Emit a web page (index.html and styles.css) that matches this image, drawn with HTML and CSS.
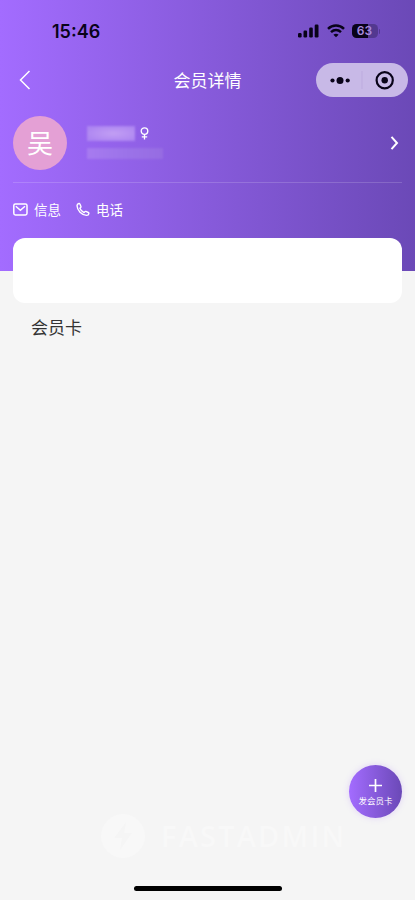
FILE: index.html
```html
<!DOCTYPE html>
<html lang="zh-CN">
<head>
<meta charset="utf-8">
<meta name="viewport" content="width=device-width, initial-scale=1">
<title>会员详情</title>
<link rel="stylesheet" href="styles.css">
</head>
<body>
<main class="screen">
  <header class="hero">
    <div class="status">
      <span class="time">15:46</span>
      <div class="signals">
        <svg width="22" height="14" viewBox="0 0 22 14" fill="#090319"><rect x="0" y="9" width="3.600" height="4.500" rx="1.200"/><rect x="5.500" y="6.500" width="3.600" height="7" rx="1.200"/><rect x="11.200" y="3.500" width="3.600" height="10" rx="1.200"/><rect x="16.700" y="0.500" width="3.800" height="13" rx="1.200"/></svg>
        <svg class="wifi" width="18" height="14" viewBox="0 0 18 14" fill="none" stroke="#090319" stroke-width="2.500"><path d="M1 4.800C5.500.500 12.500.500 17 4.800"/><path d="M4 8.100C7 5.400 11 5.400 14 8.100"/><path d="M9 13.300 6.400 10.700Q9 8.900 11.600 10.700Z" fill="#090319" stroke="none"/></svg>
        <div class="battery"><span>63</span></div>
        <i class="battery-tip"></i>
      </div>
    </div>
    <nav class="navbar">
      <svg class="back" width="12" height="20" viewBox="0 0 12 20" fill="none" stroke="#fff" stroke-width="1.500"><path d="M10.500 1 1.500 10l9 9"/></svg>
      <h1>会员详情</h1>
      <div class="capsule">
        <svg width="92" height="34" viewBox="0 0 92 34" fill="#090319"><circle cx="16.500" cy="17.500" r="2.100"/><circle cx="24" cy="17.500" r="3.500"/><circle cx="31.700" cy="17.500" r="2.100"/><path d="M46 8v18" stroke="#b9a7dc" stroke-width=".7"/><circle cx="68.700" cy="17.300" r="8.100" fill="none" stroke="#090319" stroke-width="2.200"/><circle cx="68.700" cy="17.300" r="3.200"/></svg>
      </div>
    </nav>
    <section class="profile">
      <div class="avatar">吴</div>
      <div class="identity">
        <div class="name-row"><span class="name-mask"></span><svg width="9" height="13" viewBox="0 0 9 13" fill="none" stroke="#fff" stroke-width="1.300"><circle cx="4.500" cy="4.100" r="3.300"/><path d="M4.500 7.300v5.200M1.800 9.900h5.400"/></svg></div>
        <span class="phone-mask"></span>
      </div>
      <svg class="more" width="9" height="16" viewBox="0 0 9 16" fill="none" stroke="#fff" stroke-width="2"><path d="M1.500 1.800 7 8l-5.500 6.200"/></svg>
    </section>
    <div class="contacts">
      <span class="contact"><svg width="15" height="13" viewBox="0 0 15 13" fill="none" stroke="#fff" stroke-width="1.500"><rect x=".8" y=".9" width="13.200" height="11" rx="1.600"/><path d="m2.800 3.300 4.600 3.900 4.600-3.900"/></svg>信息</span>
      <span class="contact phone"><svg width="14" height="15" viewBox="0 0 15 15" fill="none" stroke="#fff" stroke-width="1.500" stroke-linejoin="round"><path d="M3.100 1.100C2 1.300 1.100 2.200 1.100 3.500c.3 5.300 4.800 9.900 10.200 10.300 1.300 0 2.300-.8 2.500-2 .1-.5-.1-.9-.6-1.100L10.600 9.600c-.5-.2-.9-.1-1.200.3l-.8.900C6.700 9.900 5 8.200 4.100 6.200l.9-.8c.4-.3.500-.7.300-1.200L4.200 1.700c-.2-.5-.6-.7-1.100-.6Z"/></svg>电话</span>
    </div>
  </header>
  <section class="card"></section>
  <h2>会员卡</h2>
  <div class="watermark">
    <svg width="44" height="44" viewBox="0 0 44 44"><circle cx="22" cy="22" r="22" fill="#f8f8f8"/><path d="M25 8 13 24h8l-2 12 12-17h-8Z" fill="#f5f5f5"/></svg>
    <span>FASTADMIN</span>
  </div>
  <div class="home-indicator"></div>
  <button class="fab"><svg width="13" height="13" viewBox="0 0 13 13" stroke="#fff" stroke-width="1.700"><path d="M6.500 0v13M0 6.500h13"/></svg><span>发会员卡</span></button>
</main>
</body>
</html>
```
FILE: styles.css
```css
* { box-sizing: border-box; }
body { margin: 0; font-family: "Liberation Sans", "Noto Sans CJK SC", sans-serif; }
svg { display: block; flex: none; }
h1, h2 { margin: 0; font-weight: 400; }
.screen { position: relative; display: flex; flex-direction: column; height: 900px; overflow: hidden; background: #f5f5f5; }
.hero { flex: none; height: 271px; background: linear-gradient(90deg, #a36cff 0%, #6b49b7 100%); color: #fff; }
.status { height: 63px; display: flex; justify-content: space-between; padding: 20px 35px 0 52px; color: #090319; }
.time { font: 600 18px/23px Inter, sans-serif; }
.signals { display: flex; height: 22px; align-items: center; }
.wifi { margin: 0 7px; }
.battery { width: 26px; height: 14px; border-radius: 4.500px; background: linear-gradient(90deg, #090319 63%, #533890 63%); color: #a78bdd; font: 600 12px/14px Inter, sans-serif; text-align: center; }
.battery-tip { width: 1.500px; height: 5px; margin-left: 1px; border-radius: 0 2px 2px 0; background: #533890; }
.navbar { display: grid; grid-template-columns: 92px 1fr 92px; align-items: center; height: 34px; padding: 0 7px; }
.back { margin-left: 12px; }
.navbar h1 { padding-top: 4px; text-align: center; font-size: 17px; line-height: 24px; }
.capsule { height: 34px; border-radius: 17px; background: #c8b9e7; }
.profile { display: flex; align-items: center; height: 86px; margin: 0 13px; padding: 6px 3px 0 0; border-bottom: 1px solid rgba(255,255,255,.16); }
.avatar { width: 54px; height: 54px; border-radius: 50%; background: #e4a0d5; font-size: 26px; line-height: 57px; text-align: center; }
.identity { margin: -1px 0 0 20px; }
.name-row { display: flex; align-items: center; gap: 5px; height: 15px; }
.name-mask { width: 48px; height: 15px; background: radial-gradient(ellipse at 55% 50%, #c29ff4, #ad85f1 80%); filter: blur(.8px); }
.phone-mask { display: block; width: 76px; height: 11px; margin-top: 7px; background: linear-gradient(90deg, #a77bf0, #9c73e9 50%, #966ce2); filter: blur(.8px); }
.more { margin-left: auto; }
.contacts { display: flex; align-items: center; height: 20px; margin-top: 16px; padding-left: 13px; font-size: 13.500px; }
.contact { display: flex; align-items: center; gap: 6px; }
.phone { margin-left: 15px; }
.card { flex: none; height: 65px; margin: -33px 13px 0; border-radius: 12px; background: #fff; }
h2 { margin: 14px 0 0 31px; font-size: 17px; line-height: 24px; color: #333; }
.watermark { display: flex; align-items: center; gap: 16px; height: 44px; margin: auto 0 28px 101px; }
.watermark span { font: 600 29px/40px "Open Sans", sans-serif; letter-spacing: 2.200px; color: #f8f8f8; }
.home-indicator { flex: none; width: 148px; height: 5px; margin: 0 0 9px 134px; border-radius: 3px; background: #000; }
.fab { position: absolute; right: 13px; top: 765px; width: 53px; height: 53px; padding: 2px 0 0; border: 0; border-radius: 50%; display: flex; flex-direction: column; align-items: center; justify-content: center; gap: 3px; color: #fff; background: linear-gradient(90deg, #a36cff, #6b49b7); box-shadow: 0 0 6px rgba(163,108,255,.25); }
.fab span { font: 8.500px/12px "Liberation Sans", "Noto Sans CJK SC", sans-serif; }
```
